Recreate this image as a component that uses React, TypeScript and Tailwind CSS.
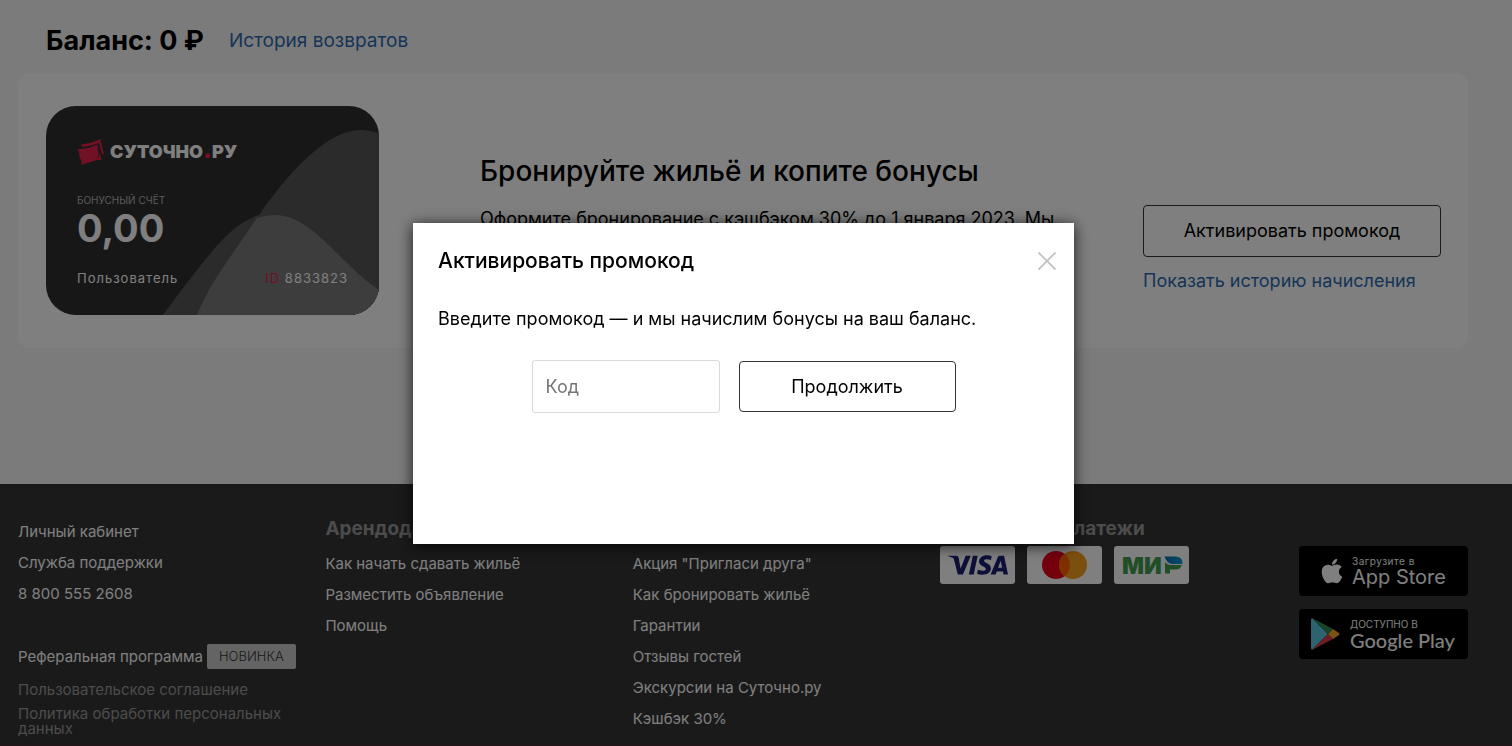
import type { ReactNode } from "react";
import { FaApple } from "react-icons/fa";
import { SiVisa } from "react-icons/si";

function FooterLink({ children }: { children: ReactNode }) {
  return (
    <li className="flex h-[31px] items-center">
      <a href="#" className="whitespace-nowrap">
        {children}
      </a>
    </li>
  );
}

function FooterColumn({ title, links }: { title: string; links: string[] }) {
  return (
    <div className="pt-px">
      <h3 className="mb-1 h-[27px] text-[19px] leading-6 font-bold whitespace-nowrap text-[#999999]">{title}</h3>
      <ul>
        {links.map((link) => (
          <FooterLink key={link}>{link}</FooterLink>
        ))}
      </ul>
    </div>
  );
}

function BonusCard() {
  return (
    <div className="relative mt-[33px] h-[209px] w-[333px] shrink-0 overflow-hidden rounded-[30px] bg-[#2e2e2e] px-[31px] text-white">
      <svg className="absolute inset-0 h-full w-full" viewBox="0 0 333 209" aria-hidden="true">
        <path
          d="M117 209 C150 168 178 119 213 109 C250 56 285 24 315 24 Q325 24 333 28 V209 Z"
          fill="#565656"
        />
        <path
          d="M117 209 C151 163 190 109 229 109 C266 109 292 156 333 184 V209 Z"
          fill="#565656"
        />
        <path
          d="M151 209 C165 174 188 147 211 112 Q220 109 229 109 C266 109 292 156 333 184 V209 Z"
          fill="#7a7a7a"
        />
      </svg>
      <div className="relative flex flex-col">
        <div className="mt-8 flex h-7 items-center gap-[5px]">
          <svg className="h-7 w-7" viewBox="0 0 28 28" fill="#e4204b" aria-hidden="true">
            <path d="M4 6.5 C10 6 17 4 24 1 L23.5 3.5 C25 7 25.5 11 27 16 L25 16.5 C24 12 23 8 22 5 C16 7.5 10 8.500 5 9 Z" />
            <path d="M1 11 C8 11 14 9.500 20 6.500 C22 11 22 16 25 21.500 C18 22.500 12 24 5 27 C4 24 5 22 2.500 20 C3 17 2 14 1 11 Z" />
            <path d="M20.500 10 Q23 15 21 20.500" fill="none" stroke="#2e2e2e" strokeWidth="0.8" />
          </svg>
          <span className="text-lg leading-7 font-black whitespace-nowrap">
            СУТОЧНО<span className="text-2xl leading-none text-[#e4204b]">.</span>РУ
          </span>
        </div>
        <div className="mt-7 text-[10px] leading-3 text-[#b5b5b5]">БОНУСНЫЙ СЧЁТ</div>
        <div className="text-[38px] leading-11 font-bold">0,00</div>
        <div className="mt-[18px] flex justify-between text-[13px] leading-5 tracking-[1px]">
          <span>Пользователь</span>
          <span>
            <span className="text-[#e4204b]">ID</span> 8833823
          </span>
        </div>
      </div>
    </div>
  );
}

function PaymentLogos() {
  return (
    <div className="flex gap-3">
      <div className="flex h-[38px] w-[75px] items-center justify-center rounded-[3px] bg-white text-[#1a1f71]">
        <SiVisa className="h-[60px] w-[60px]" title="VISA" />
      </div>
      <div className="flex h-[38px] w-[75px] items-center justify-center rounded-[3px] bg-white">
        <svg className="h-7 w-[45px]" viewBox="0 0 45 28" role="img" aria-label="Mastercard">
          <circle cx="14" cy="14" r="14" fill="#eb001b" />
          <circle cx="31" cy="14" r="14" fill="#f79e1b" />
          <path d="M22.5 2.9 A14 14 0 0 1 22.5 25.1 A14 14 0 0 1 22.5 2.9" fill="#ff5f00" />
        </svg>
      </div>
      <div className="flex h-[38px] w-[75px] items-center justify-center rounded-[3px] bg-white">
        <svg className="h-[38px] w-[75px]" viewBox="0 0 75 38" role="img" aria-label="МИР">
          <defs>
            <linearGradient id="mir-cap" x1="0" x2="1">
              <stop offset="0" stopColor="#0f6ea8" />
              <stop offset="1" stopColor="#0a9bdc" />
            </linearGradient>
          </defs>
          <text x="8" y="27.500" fill="#3f9c4f" fontFamily="Inter" fontWeight="900" fontSize="23">
            МИ
          </text>
          <path d="M51 16 Q53 19 57 19 H68 Q66 23.500 62 23.500 H56 V27.500 H51 Z" fill="#3f9c4f" />
          <path d="M50.500 10.500 H62 Q69 11 68.500 18 H58 Q52.500 17 50.500 10.500 Z" fill="url(#mir-cap)" />
        </svg>
      </div>
    </div>
  );
}

function StoreBadges() {
  return (
    <div className="mt-[30px] flex w-[169px] flex-col gap-[13px] justify-self-end text-white">
      <a href="#" className="flex h-[50px] items-center gap-2 rounded-[4px] bg-black pl-[21px]">
        <FaApple className="h-7 w-6 shrink-0" />
        <span className="flex flex-col">
          <span className="text-[10px] leading-3 tracking-wider">Загрузите в</span>
          <span className="text-xl leading-5 whitespace-nowrap">App Store</span>
        </span>
      </a>
      <a href="#" className="flex h-[50px] items-center gap-[10px] rounded-[4px] bg-black pl-3">
        <svg className="h-8 w-[29px] shrink-0" viewBox="0 0 29 32" aria-hidden="true">
          <path d="M1 0 L17 16 L1 32 Q0 31 0 30 V2 Q0 1 1 0 Z" fill="#5bc4e0" />
          <path d="M1 0 L22 11 L17 16 Z" fill="#2e8b57" />
          <path d="M1 32 L22 21 L17 16 Z" fill="#d83a48" />
          <path d="M22 11 L28 15 Q29 16 28 17 L22 21 L17 16 Z" fill="#f5a32c" />
        </svg>
        <span className="flex flex-col">
          <span className="text-[10px] leading-3">ДОСТУПНО В</span>
          <span className="font-[Lato] text-xl leading-5 font-medium whitespace-nowrap">Google Play</span>
        </span>
      </a>
    </div>
  );
}

function Footer() {
  return (
    <footer className="grow border-b border-[#4a2a34] bg-[#343434] pt-8 pr-11 pl-[18px] text-[15px] leading-[15px] text-white">
      <div className="grid grid-cols-[repeat(4,21.2%)_1fr]">
        <div>
          <ul>
            <FooterLink>Личный кабинет</FooterLink>
            <FooterLink>Служба поддержки</FooterLink>
            <FooterLink>8 800 555 2608</FooterLink>
          </ul>
          <div className="mt-8 flex h-[31px] items-center gap-1">
            <a href="#" className="whitespace-nowrap">
              Реферальная программа
            </a>
            <span className="flex h-[25px] items-center rounded-[2px] bg-[#c8c8c8] px-3 text-[13px] font-light text-[#343434]">
              НОВИНКА
            </span>
          </div>
          <div className="mt-[10px] flex flex-col gap-[9px] text-[#999999]">
            <a href="#">Пользовательское соглашение</a>
            <a href="#">Политика обработки персональных данных</a>
          </div>
        </div>
        <FooterColumn title="Арендодателям" links={["Как начать сдавать жильё", "Разместить объявление", "Помощь"]} />
        <FooterColumn
          title="Гостям"
          links={[
            'Акция "Пригласи друга"',
            "Как бронировать жильё",
            "Гарантии",
            "Отзывы гостей",
            "Экскурсии на Суточно.ру",
            "Кэшбэк 30%",
          ]}
        />
        <div className="pt-px">
          <h3 className="mb-[2px] h-[27px] text-[19px] leading-6 font-bold whitespace-nowrap text-[#999999]">
            Безопасные платежи
          </h3>
          <PaymentLogos />
        </div>
        <StoreBadges />
      </div>
    </footer>
  );
}

function PromoDialog() {
  return (
    <div className="fixed inset-0 flex items-start justify-center bg-black/50 pt-[223px] pr-[25px]">
      <div
        role="dialog"
        aria-modal="true"
        aria-labelledby="promo-title"
        className="w-full max-w-[661px] bg-white px-[25px] pt-[22px] pb-[131px] shadow-[0_2px_14px_rgba(0,0,0,0.8)]"
      >
        <div className="-mr-2 flex items-center justify-between">
          <h2 id="promo-title" className="text-[21px] leading-8 font-medium">
            Активировать промокод
          </h2>
          <button type="button" aria-label="Закрыть">
            <svg className="h-5 w-5" viewBox="0 0 20 20" fill="none" stroke="#c4c4c4" strokeWidth="1.8" aria-hidden="true">
              <path d="M1.5 1.5 L18.5 18.5 M18.5 1.5 L1.5 18.5" />
            </svg>
          </button>
        </div>
        <p className="mt-[30px] text-lg leading-6">Введите промокод — и мы начислим бонусы на ваш баланс.</p>
        <form className="mt-[29px] flex items-center justify-center gap-[19px]">
          <input
            type="text"
            aria-label="Код"
            placeholder="Код"
            className="h-[53px] w-[188px] rounded-[3px] border border-[#d9d9d9] px-[13px] text-lg placeholder:text-[#757575]"
          />
          <button type="button" className="h-[51px] w-[217px] rounded-[4px] border border-[#343434] text-lg">
            Продолжить
          </button>
        </form>
      </div>
    </div>
  );
}

export default function App() {
  return (
    <div className="flex min-h-screen flex-col bg-[#f7f7f7] font-[Inter,sans-serif] text-black">
      <main className="pr-11 pb-[136px] pl-[18px]">
        <div className="flex h-[73px] items-center gap-[25px] pt-2 pl-7">
          <h1 className="text-[27px] leading-9 font-bold">Баланс: 0 ₽</h1>
          <a href="#" className="text-[19px] leading-6 text-[#2c69af]">
            История возвратов
          </a>
        </div>
        <section className="flex h-[275px] items-start rounded-xl bg-white pr-[27px] pl-7">
          <BonusCard />
          <div className="ml-[101px] flex-1 pt-20 pr-[60px]">
            <h2 className="text-[28px] leading-9 font-medium whitespace-nowrap">Бронируйте жильё и копите бонусы</h2>
            <p className="mt-[18px] text-lg leading-6">Оформите бронирование с кэшбэком 30% до 1 января 2023. Мы</p>
          </div>
          <div className="flex w-[298px] shrink-0 flex-col gap-3 pt-[132px]">
            <button type="button" className="h-[52px] rounded-[4px] border border-[#343434] text-lg">
              Активировать промокод
            </button>
            <a href="#" className="text-lg leading-6 text-[#2c69af]">
              Показать историю начисления
            </a>
          </div>
        </section>
      </main>
      <Footer />
      <PromoDialog />
    </div>
  );
}
